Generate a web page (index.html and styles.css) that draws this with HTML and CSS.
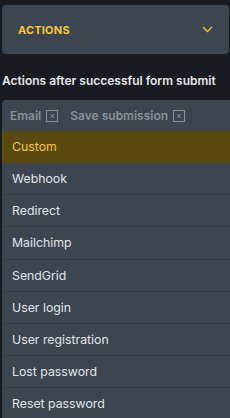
FILE: index.html
```html
<!DOCTYPE html>
<html>
<head>
<meta charset="utf-8">
<link rel="stylesheet" href="styles.css">
</head>
<body>
<div class="page">
  <div class="card">
    <span class="card-title">ACTIONS</span>
    <svg class="chev" width="11" height="7" viewBox="0 0 11 7"><path d="M1 1 L5.5 5.5 L10 1" fill="none" stroke="#f2c230" stroke-width="1.4"/></svg>
  </div>
  <div class="label">Actions after successful form submit</div>
  <div class="select">
    <div class="tags">
      <span class="tag">Email <span class="x">×</span></span>
      <span class="tag">Save submission <span class="x">×</span></span>
    </div>
    <ul class="list">
      <li class="item active">Custom</li>
      <li class="item">Webhook</li>
      <li class="item">Redirect</li>
      <li class="item">Mailchimp</li>
      <li class="item">SendGrid</li>
      <li class="item">User login</li>
      <li class="item">User registration</li>
      <li class="item">Lost password</li>
      <li class="item">Reset password</li>
    </ul>
  </div>
</div>
</body>
</html>
```
FILE: styles.css
```css
* { box-sizing: border-box; }
html, body { margin: 0; padding: 0; }
body {
  background: #181b1f;
  font-family: Inter, "Liberation Sans", sans-serif;
  overflow: hidden;
  width: 230px;
  height: 418px;
}
.page {
  padding: 5px 0 0 2px;
}
.card {
  width: 227px;
  height: 49px;
  background: #3d4650;
  border-radius: 4px;
  display: flex;
  align-items: center;
  justify-content: space-between;
  padding: 0 16px 0 16px;
}
.card-title {
  color: #f6c736;
  font-weight: 700;
  font-size: 11px;
  letter-spacing: 0.2px;
}
.chev { display: block; margin-top: -1px; }
.label {
  color: #e4e6ea;
  font-weight: 600;
  font-size: 12px;
  margin-top: 19px;
  line-height: 15px;
}
.select {
  margin-top: 12px;
  width: 228px;
  overflow: hidden;
  background: #3d4650;
  border-radius: 4px 0 0 0;
}
.tags {
  height: 31px;
  display: flex;
  align-items: center;
  padding-left: 8px;
  gap: 12px;
}
.tag {
  color: #8a9199;
  font-weight: 600;
  font-size: 12px;
  display: flex;
  align-items: center;
  gap: 5px;
}
.x {
  display: inline-flex;
  align-items: center;
  justify-content: center;
  width: 12px;
  height: 12px;
  border: 1px solid #8a9199;
  font-size: 9px;
  line-height: 1;
  font-weight: 400;
}
.list {
  list-style: none;
  margin: 0;
  padding: 0;
}
.item {
  height: 32.14px;
  display: flex;
  align-items: center;
  padding-left: 10px;
  color: #e2e4e8;
  font-size: 12.3px;
  border-bottom: 1px solid #353c45;
}
.item.active {
  background: #5b4a10;
  color: #f8c936;
  border-bottom-color: #5b4a10;
}
```
